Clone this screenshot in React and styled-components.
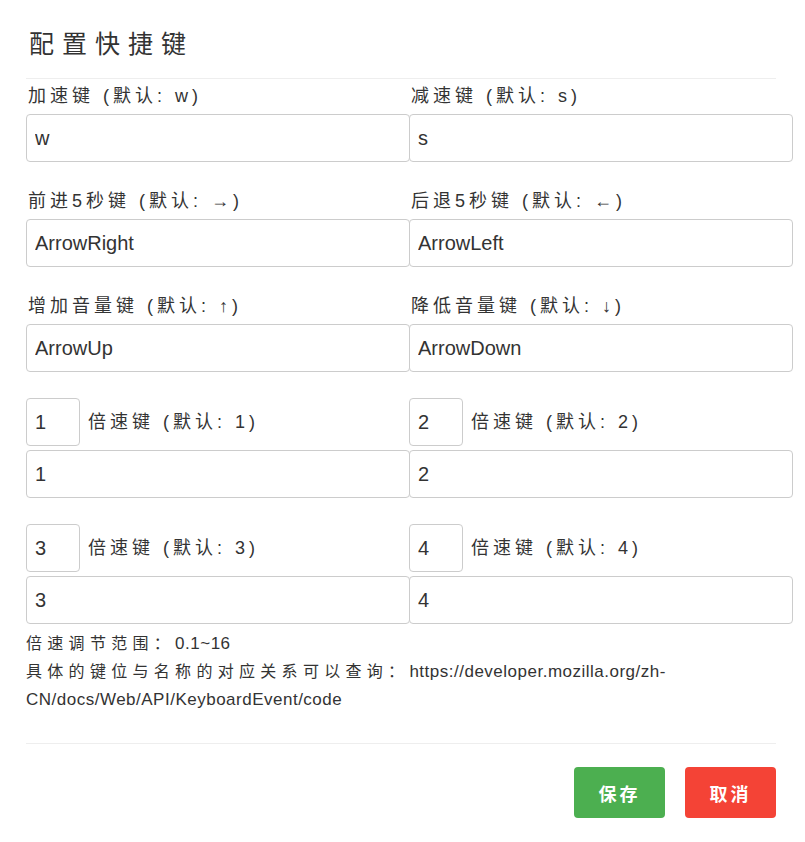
import React from 'react';
import styled, { createGlobalStyle } from 'styled-components';

const GlobalStyle = createGlobalStyle`
  html, body {
    margin: 0;
    padding: 0;
    background: #ffffff;
  }
  body {
    font-family: "Liberation Sans", "Noto Sans CJK SC", sans-serif;
    color: #333333;
  }
  * {
    box-sizing: border-box;
  }
`;

const keyFields = [
  { label: '加速键', def: 'w', value: 'w' },
  { label: '减速键', def: 's', value: 's' },
  { label: '前进5秒键', def: '→', value: 'ArrowRight' },
  { label: '后退5秒键', def: '←', value: 'ArrowLeft' },
  { label: '增加音量键', def: '↑', value: 'ArrowUp' },
  { label: '降低音量键', def: '↓', value: 'ArrowDown' },
];

const speedFields = [
  { key: '1', value: '1' },
  { key: '2', value: '2' },
  { key: '3', value: '3' },
  { key: '4', value: '4' },
];

const App = () => {
  return (
    <>
      <GlobalStyle />
      <Dialog>
        <Header>
          <Title>配置快捷键</Title>
        </Header>
        <FieldGrid>
          {keyFields.map((f) => (
            <Field key={f.label}>
              <Label>
                {f.label} (默认: {f.def})
              </Label>
              <TextInput defaultValue={f.value} />
            </Field>
          ))}
          {speedFields.map((f) => (
            <Field key={'speed' + f.key} speed>
              <SpeedHead>
                <KeyInput defaultValue={f.key} />
                <Label inline>倍速键 (默认: {f.value})</Label>
              </SpeedHead>
              <TextInput defaultValue={f.value} />
            </Field>
          ))}
        </FieldGrid>
        <Notes>
          <NoteLine>
            <NoteCjk>倍速调节范围：</NoteCjk>0.1~16
          </NoteLine>
          <NoteLine>
            <NoteCjk>具体的键位与名称的对应关系可以查询：</NoteCjk>
            https://developer.mozilla.org/zh-CN/docs/Web/API/KeyboardEvent/code
          </NoteLine>
        </Notes>
        <Footer>
          <Button color="#4caf50">保存</Button>
          <Button color="#f44336">取消</Button>
        </Footer>
      </Dialog>
    </>
  );
};

export default App;

const Dialog = styled.div`
  width: 805px;
  padding: 0 29px 0 26px;
`;

const Header = styled.div`
  width: 750px;
  height: 79px;
  padding-top: 26px;
  border-bottom: 1px solid #eeeeee;
`;

const Title = styled.h2`
  margin: 0 0 0 3px;
  font-family: "Noto Sans CJK SC", sans-serif;
  font-size: 25px;
  font-weight: 400;
  line-height: 32px;
  letter-spacing: 8px;
  color: #333333;
`;

const FieldGrid = styled.div`
  display: grid;
  grid-template-columns: 383px 383px;
  row-gap: 25px;
  width: 767px;
  padding-top: 3px;
`;

const Field = styled.div`
  display: flex;
  flex-direction: column;
  gap: 4px;
  margin-top: ${({ speed }) => (speed ? '1px' : '0')};
`;

const Label = styled.label`
  display: block;
  height: 28px;
  padding-left: ${({ inline }) => (inline ? '0' : '2px')};
  font-size: 18px;
  line-height: 28px;
  letter-spacing: 4px;
  color: #333333;
  white-space: nowrap;
`;

const SpeedHead = styled.div`
  display: flex;
  align-items: center;
  gap: 8px;
`;

const TextInput = styled.input`
  width: 384px;
  height: 48px;
  padding: 0 8px;
  border: 1px solid #cccccc;
  border-radius: 4px;
  font-family: "Liberation Sans", sans-serif;
  font-size: 20px;
  color: #333333;
  background: #ffffff;
  outline: none;
`;

const KeyInput = styled(TextInput)`
  width: 54px;
`;

const Notes = styled.div`
  margin-top: 6px;
  width: 750px;
  font-size: 17px;
  letter-spacing: 0.5px;
  color: #333333;
`;

const NoteLine = styled.div`
  line-height: 28px;
`;

const NoteCjk = styled.span`
  font-family: "Noto Sans CJK SC", sans-serif;
  font-size: 16px;
  line-height: 1;
  letter-spacing: 5.3px;
`;

const Footer = styled.div`
  display: flex;
  justify-content: flex-end;
  gap: 20px;
  width: 750px;
  margin-top: 29px;
  padding-top: 23px;
  border-top: 1px solid #eeeeee;
`;

const Button = styled.button`
  width: 91px;
  height: 51px;
  border: none;
  border-radius: 4px;
  background: ${({ color }) => color};
  color: #ffffff;
  font-family: "Noto Sans CJK SC", sans-serif;
  font-size: 18px;
  font-weight: 700;
  letter-spacing: 3px;
  cursor: pointer;
`;
